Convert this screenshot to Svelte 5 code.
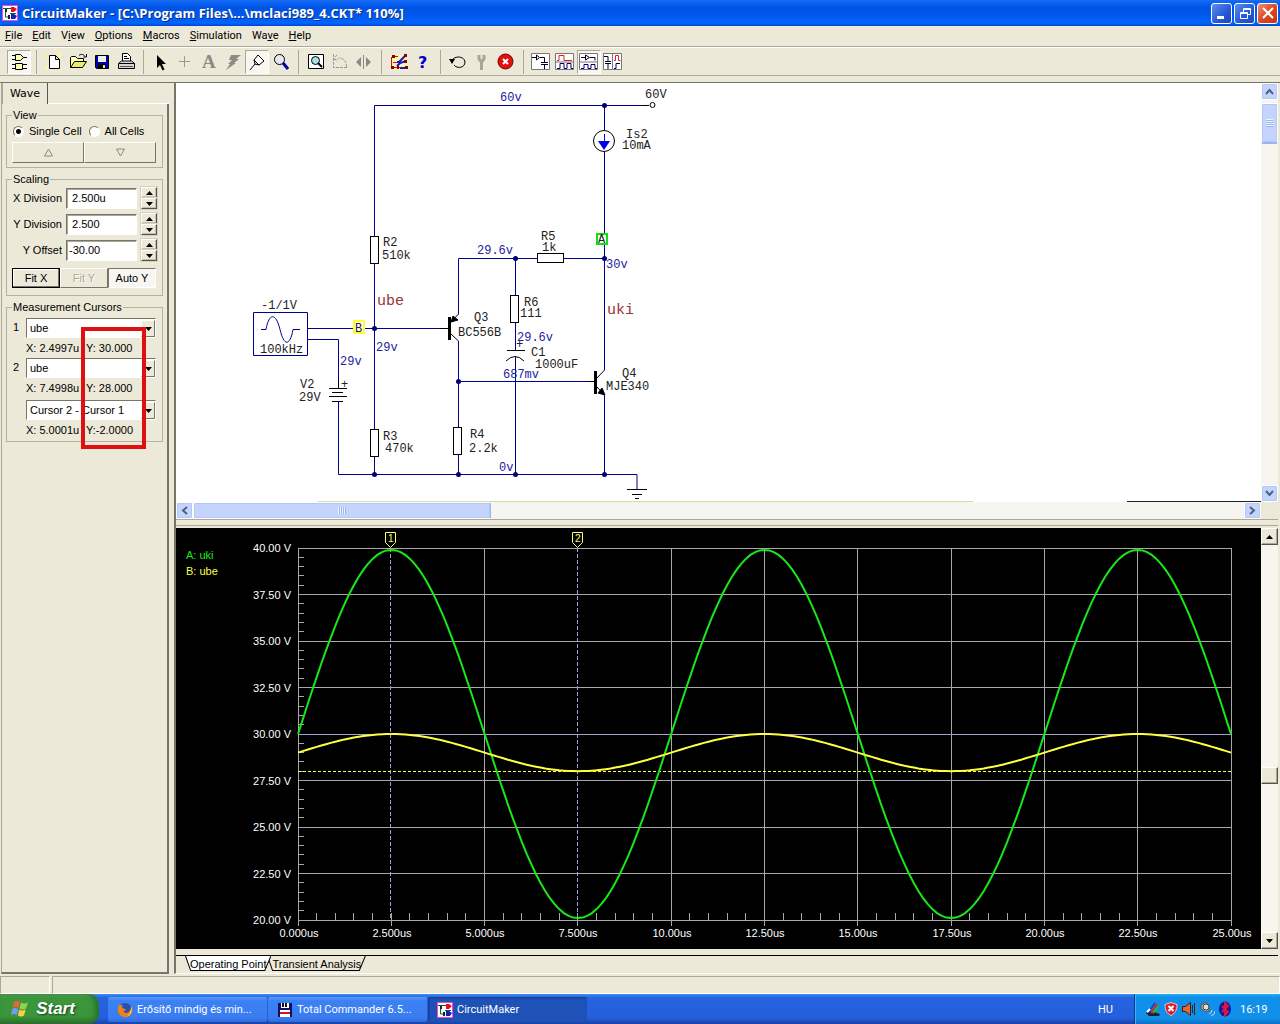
<script lang="ts">
    const menus = [
        ["", "F", "ile"], ["", "E", "dit"], ["V", "i", "ew"], ["", "O", "ptions"],
        ["", "M", "acros"], ["", "S", "imulation"], ["Wa", "v", "e"], ["", "H", "elp"],
    ];

    // toolbar, one inner list per group of buttons, icons are on a 22x22 grid
    const toolGroups = [
        [
            { name: "Parts", pressed: true, icon: `<g fill="#ffffb0" stroke="#000"><path d="M7.500 3.500h5l3 3-3 3h-5z"/><path d="M7.500 12.500h7v6h-7z"/></g><path stroke="#000" d="M4 4.500h3M4 8.500h3M15 6.500h4M4 13.500h3M4 17.500h3M15 13.500h4M15 17.500h4"/>` },
        ],
        [
            { name: "New", icon: `<path fill="#ffff70" d="M3 4h2v2H3zM15 3h3v3h-3zM3 15h2v3H3zM16 17h2v2h-2z"/><path fill="#fff" stroke="#000" d="M6.500 4.500h6l4 4v9h-10zM12.500 4.500v4h4"/>` },
            { name: "Open", icon: `<path fill="#ffffb0" stroke="#000" d="M3.500 16.500v-10l1-1h4l2 2h6v3"/><path fill="#eeea65" stroke="#000" d="M3.500 16.500l4-6h12l-4 6z"/><path fill="none" stroke="#000" d="M12 4.500c2-2 5-1 6 1M19.500 3v3h-3"/>` },
            { name: "Save", icon: `<path fill="#0000a8" stroke="#000" d="M4.500 4.500h13v13h-12l-1-1z"/><path fill="#eee" d="M7 5h8v6H7z"/><path fill="#000" d="M7 13h8v4H7z"/><path fill="#ddd" d="M12 14h2v3h-2z"/>` },
            { name: "Print", icon: `<path fill="#fff" stroke="#000" d="M7.500 10.500v-8h5l3 3v5z"/><path stroke="#000" d="M9 5.500h3M9 7.500h5"/><path fill="#d8d8d0" stroke="#000" d="M3.500 12.500l3-2.500h10l3 2.500v5h-16zM3.500 12.500h16"/><path stroke="#555" d="M5 15.500h13"/>` },
        ],
        [
            { name: "Arrow", icon: `<path d="M7 4v13l3-3 2.500 5.500 2-1L12 13h4z"/>` },
            { name: "Wire", icon: `<path stroke="#999" d="M10.500 5v11M5 10.500h11"/>` },
            { name: "Text", icon: `<text x="4" y="17" font-family="Liberation Serif, serif" font-size="19" font-weight="bold" fill="#8b8b83">A</text>` },
            { name: "Delete", icon: `<path fill="#8b8b83" d="M9 4h10l-5 4h3l-5 4h2L4 19l4-6H6l4-4H7z"/>` },
            { name: "Probe", pressed: true, icon: `<path fill="#fff" stroke="#000" d="M4 19l5-6-1-4 4-5 6 6-5 4-4-1M8 9l5 5"/>` },
            { name: "Zoom", icon: `<circle cx="9.500" cy="8.500" r="5" fill="#e8e8f0" stroke="#000"/><path stroke="#0000b0" stroke-width="3" d="M13 12l5 6"/>` },
        ],
        [
            { name: "Fit", icon: `<path fill="#fff" stroke="#000" d="M3.500 3.500h15v14h-15z"/><circle cx="10.500" cy="9.500" r="4" fill="#a6e2dd" stroke="#000"/><path stroke="#000" stroke-width="2" d="M13 12l4 4"/>` },
            { name: "Rotate", icon: `<path fill="none" stroke="#999" d="M4.500 3v13.500H19M4 8.500h5M17.500 16c0-6-3-9-8-9M8 4L5 7.500l3 3" stroke-dasharray="3 1"/>` },
            { name: "Mirror", icon: `<path stroke="#8b8b83" d="M10.500 4v14"/><path fill="#8b8b83" d="M8 6v10l-5-5zM13 6v10l5-5z"/>` },
        ],
        [
            { name: "Trace", icon: `<path fill="#ffff90" d="M3 3h16v16H3z" opacity=".5"/><path stroke="#d01010" fill="none" d="M5 5.500h5M3.500 6v10M5 11.500h4M5 16.500h13"/><path stroke="#1818c0" stroke-width="2" fill="none" d="M9 11h2l6-6M9 15l3-3 6-2M12 17h5"/><path fill="#800" d="M4 4h3v3H4zM16 3h3v3h-3zM16 9h3v3h-3zM9 15h2v3H9zM17 15h3v3h-3zM3 15h3v3H3z"/>` },
            { name: "Help", icon: `<text x="6" y="17" font-family="DejaVu Sans, sans-serif" font-size="16" font-weight="bold" fill="#0000c8">?</text>` },
        ],
        [
            { name: "Reset", icon: `<path fill="none" stroke="#000" d="M5 10c1-5 12-6 13 1 0 6-8 7-11 3"/><path d="M2 8h6l-3 5z"/>` },
            { name: "Step", icon: `<path fill="none" stroke="#a5a59c" stroke-width="3" d="M8 4v4l2.500 3v8M13 4v4l-2.500 3"/>` },
            { name: "Stop", icon: `<circle cx="10.500" cy="10.500" r="7.500" fill="#e60f0f" stroke="#730000"/><path stroke="#fff" stroke-width="2" d="M8 8l5 5M13 8l-5 5"/>` },
        ],
        [
            { name: "Schematic", icon: `<path fill="#fff" stroke="#777" d="M1.500 2.500h18v16h-18z"/><path fill="none" stroke="#002" d="M2 6.500h4M6.500 4v5l3-2.500zM10 6.500h4.500v5M11 11.500h7M11 13.500h7M14.500 14v4"/>` },
            { name: "Waves", icon: `<path fill="#fff" stroke="#777" d="M1.500 2.500h18v16h-18z"/><path fill="none" stroke="#d22" d="M3 9.500h2v-5h5v5h8"/><path fill="none" stroke="#006" d="M3 17.500h3v-5h4v5h3v-5h4v5h2"/><path stroke="#777" d="M2 11h17"/>` },
            { name: "Split rows", pressed: true, icon: `<path fill="#fff" stroke="#777" d="M1.500 2.500h18v16h-18z"/><path fill="none" stroke="#002" d="M3 6.500h4M7.500 4v5l4-2.500zM12 6.500h5v3"/><path fill="none" stroke="#006" d="M3 17.500h3v-4h4v4h3v-4h4v4h2"/><path stroke="#777" d="M2 11h17"/>` },
            { name: "Split columns", icon: `<path fill="#fff" stroke="#777" d="M1.500 2.500h18v16h-18zM10.500 2.500v16"/><path fill="none" stroke="#002" d="M2 5.500h4v5M3 10.500h6M3 12.500h6M6 13v5"/><path fill="none" stroke="#d22" d="M12 9.500h1.500v-5h3v5h2"/><path fill="none" stroke="#006" d="M12 17.500h2v-5h4"/>` },
        ],
    ];

    const scales = [
        { id: "xdiv", label: "X Division", value: " 2.500u" },
        { id: "ydiv", label: "Y Division", value: " 2.500" },
        { id: "yoff", label: "Y Offset", value: "-30.00" },
    ];

    const cursors = [
        { num: "1", source: "ube", x: "X: 2.4997u", y: "Y: 30.000" },
        { num: "2", source: "ube", x: "X: 7.4998u", y: "Y: 28.000" },
        { num: "", source: "Cursor 2 - Cursor 1", x: "X: 5.0001u", y: "Y:-2.0000" },
    ];

    // schematic labels: x, baseline, text
    const partLabels: [number, number, string][] = [
        [645, 98, "60V"], [626, 138, "Is2"], [622, 149, "10mA"], [383, 246, "R2"], [382, 259, "510k"],
        [541, 240, "R5"], [542, 251, "1k"], [524, 306, "R6"], [520, 317, "111"], [516, 348, "+"],
        [531, 356, "C1"], [535, 368, "1000uF"], [474, 321, "Q3"], [458, 336, "BC556B"], [622, 377, "Q4"],
        [606, 390, "MJE340"], [470, 438, "R4"], [469, 452, "2.2k"], [383, 440, "R3"], [385, 452, "470k"],
        [300, 388, "V2"], [299, 401, "29V"], [341, 388, "+"], [261, 309, "-1/1V"], [260, 353, "100kHz"],
    ];
    const voltLabels: [number, number, string][] = [
        [500, 101, "60v"], [477, 254, "29.6v"], [606, 268, "30v"], [517, 341, "29.6v"],
        [503, 378, "687mv"], [376, 351, "29v"], [340, 365, "29v"], [499, 471, "0v"],
    ];
    const nodes = [[604, 105], [374, 328], [515, 258], [604, 258], [458, 381], [374, 474], [458, 474], [515, 474], [604, 474]];
    const resistors = [[370, 236], [370, 429], [453, 427], [510, 295]];

    // graph area
    const left = 298, right = 1231, top = 548, bottom = 920;
    const toX = (us: number) => left + us * (right - left) / 25;
    const toY = (v: number) => bottom - (v - 20) * (bottom - top) / 20;
    const snap = (n: number) => Math.floor(n) + 0.5;

    const majors = [0, 1, 2, 3, 4, 5, 6, 7, 8, 9, 10].map(i => i * 2.5);
    const volts = [40, 37.5, 35, 32.5, 30, 27.5, 25, 22.5, 20];
    const minorX = Array.from({ length: 51 }, (_, i) => i * 0.5);
    const minorY = Array.from({ length: 41 }, (_, i) => 20 + i * 0.5);

    function sine(offset: number, amp: number) {
        var pts = [];
        for (var t = 0; t <= 25; t += 0.125) {
            pts.push(toX(t).toFixed(1) + "," + toY(offset + amp * Math.sin(t * Math.PI / 5)).toFixed(1));
        }
        return pts.join(" ");
    }
    const uki = sine(30, 9.9);
    const ube = sine(29, 1);
</script>

{#snippet logo()}
    <svg class="logo" width="16" height="16" viewBox="0 0 16 16">
        <path fill="#fff" stroke="#f4c" d="M.5.5h15v15H.5z" />
        <path stroke="#063" fill="none" d="M1 3.500h9M3.500 4v8h4M8 8.500h6" />
        <path stroke="#222" stroke-width="2" d="M4 4v3M7 10v4" />
        <path fill="#e01020" d="M9 2h3l3 2-3 3H9z" />
        <path fill="#1020c0" d="M9 9h3l3 2-2 3H9z" />
    </svg>
{/snippet}

<div class="desktop">
    <header class="titlebar">
        {@render logo()}
        <h1>CircuitMaker - [C:\Program Files\...\mclaci989_4.CKT* 110%]</h1>
        <button class="win" aria-label="Minimize"><svg width="20" height="20"><path stroke="#fff" stroke-width="3" d="M5 14.500h7" /></svg></button>
        <button class="win" aria-label="Restore"><svg width="20" height="20"><path stroke="#fff" fill="none" d="M5.500 9.500h7v6h-7zM5.500 10.500h7M8.500 9V5.500h7v6H13M8.500 6.500h7" /></svg></button>
        <button class="win close" aria-label="Close"><svg width="20" height="20"><path stroke="#fff" stroke-width="2" d="M5 5l10 10M15 5L5 15" /></svg></button>
    </header>

    <nav class="menubar">
        {#each menus as [pre, key, post]}
            <button>{pre}<u>{key}</u>{post}</button>
        {/each}
    </nav>

    <div class="toolbar">
        {#each toolGroups as group}
            <div class="tools">
                {#each group as tool}
                    <button class:pressed={tool.pressed} aria-label={tool.name}>
                        <svg width="22" height="22" viewBox="0 0 22 22">{@html tool.icon}</svg>
                    </button>
                {/each}
            </div>
        {/each}
    </div>

    <main>
        <aside>
            <div class="tabrow"><button class="tab">Wave</button><span></span></div>
            <div class="page">
                <fieldset class="view">
                    <legend>View</legend>
                    <div class="radios">
                        <label><input type="radio" name="cells" checked />Single Cell</label>
                        <label><input type="radio" name="cells" />All Cells</label>
                    </div>
                    <div class="updown">
                        <button aria-label="Previous cell"><svg width="11" height="9"><path fill="none" stroke="#8b8b83" d="M5.500 1l4 7h-8z" /></svg></button>
                        <button aria-label="Next cell"><svg width="11" height="9"><path fill="none" stroke="#8b8b83" d="M5.500 8l4-7h-8z" /></svg></button>
                    </div>
                </fieldset>

                <fieldset class="scaling">
                    <legend>Scaling</legend>
                    {#each scales as s}
                        <div class="scale">
                            <label for={s.id}>{s.label}</label>
                            <input id={s.id} type="text" value={s.value} />
                            <div class="spin">
                                <button aria-label="Increase {s.label}"><svg width="7" height="4"><path d="M0 4L3.500 0 7 4z" /></svg></button>
                                <button aria-label="Decrease {s.label}"><svg width="7" height="4"><path d="M0 0l3.500 4L7 0z" /></svg></button>
                            </div>
                        </div>
                    {/each}
                    <div class="fits">
                        <button class="default">Fit X</button>
                        <button disabled>Fit Y</button>
                        <button class="down">Auto Y</button>
                    </div>
                </fieldset>

                <fieldset class="cursors">
                    <legend>Measurement Cursors</legend>
                    {#each cursors as c, i}
                        <div class="cursor" class:diff={c.num === ""}>
                            <label for="cursor{i}">{c.num}</label>
                            <div class="combo">
                                <select id="cursor{i}" aria-label="{c.source} {i + 1}"><option>{c.source}</option></select>
                                <span class="drop"><svg width="7" height="4"><path d="M0 0h7L3.500 4z" /></svg></span>
                            </div>
                            <div class="reading"><span>{c.x}</span><span>{c.y}</span></div>
                        </div>
                    {/each}
                    <div class="mark"></div>
                </fieldset>
            </div>
        </aside>

        <section class="work">
            <div class="pane">
                <svg class="schematic" height="419" viewBox="176 83 1085 419" preserveAspectRatio="xMinYMin slice">
                    <g class="wire">
                        <path d="M374.500 236V105.500H649M374.500 263v166M374.500 457v17M307 328.500h141M307 339.500h31.500v48M338.500 402v72.500h298.500v15" />
                        <path d="M458.500 314V258.500H537M564 258.500h40M515.500 258v37M515.500 323v27M515.500 357v117M458.500 341v86M458.500 454v20M458 381.500h136M604.500 105v25M604.500 152v218M604.500 395v79" />
                        <path d="M253.500 312.500h54v43h-54zM261 329.500h5c3-17 10-17 14 0s10 17 13 0h7" />
                    </g>
                    <g class="part">
                        {#each resistors as [x, y]}
                            <rect x={x + 0.5} y={y + 0.5} width="8" height="27" />
                        {/each}
                        <rect x="537.5" y="253.5" width="26" height="9" />
                        <path d="M329 388.500h18M332 392.500h11M329 396.500h18M332 401.500h11M338.500 380v8M507 350.500h18M506 361q9-9 18 0" />
                        <path d="M451 322l7.500-8M451 334l7.500 7M597 378l7.500-8M597 387l7.500 8M440 328.500h8M588 381.500h6" />
                        <path d="M627 489.500h20M632 494.500h10M635 498.500h4M642 105.500h7" />
                        <path stroke-width="3" d="M449.500 317v23M595.500 371v23" />
                        <path fill="#000" d="M451 322l2-6 5 4zM605 395l-7-2 4-5z" />
                        <circle cx="604" cy="141" r="10.500" />
                        <circle cx="652.500" cy="105" r="2.500" />
                    </g>
                    <path fill="#00e" d="M598 141h12l-6 9z" /><path stroke="#00e" d="M604.500 134v8" />
                    {#each nodes as [x, y]}
                        <circle cx={x + 0.5} cy={y + 0.5} r="2.500" fill="#000070" />
                    {/each}
                    <rect x="354" y="321" width="10" height="12" fill="#fff" stroke="#ffff30" stroke-width="2" />
                    <rect x="597" y="234" width="10" height="10" fill="#fff" stroke="#10e010" stroke-width="2" />
                    <text x="355" y="332">B</text>
                    <text x="598" y="243">A</text>
                    {#each partLabels as [x, y, t]}<text {x} {y}>{t}</text>{/each}
                    {#each voltLabels as [x, y, t]}<text class="volt" {x} {y}>{t}</text>{/each}
                    <text class="net" x="377" y="305">ube</text>
                    <text class="net" x="607" y="314">uki</text>
                    <path stroke="#cfe0a0" d="M318 501.500h655" /><path stroke="#222" d="M1127 501.500h134" />
                </svg>
                <div class="vscroll">
                    <button aria-label="Scroll up"><svg width="9" height="7"><path d="M1 6l3.500-4L8 6" /></svg></button>
                    <div class="thumb"><i></i></div>
                    <button aria-label="Scroll down"><svg width="9" height="7"><path d="M1 1l3.500 4L8 1" /></svg></button>
                </div>
                <div class="hscroll">
                    <button aria-label="Scroll left"><svg width="7" height="9"><path d="M6 1L2 4.500 6 8" /></svg></button>
                    <div class="thumb"><i></i></div>
                    <button aria-label="Scroll right"><svg width="7" height="9"><path d="M1 1l4 3.500L1 8" /></svg></button>
                </div>
                <div class="corner"></div>
            </div>

            <div class="plot">
                <svg class="graph" height="421" viewBox="176 528 1085 421" preserveAspectRatio="xMinYMin slice">
                    <g stroke="#a8a8a8">
                        {#each majors as t}<path d="M{snap(toX(t))} {t === 2.5 || t === 7.5 ? bottom : top}V926" />{/each}
                        {#each volts as v}<path d="M{left} {snap(toY(v))}H{right}" />{/each}
                        {#each minorX as t}<path d="M{snap(toX(t))} 913V{bottom}" />{/each}
                        {#each minorY as v}<path d="M{left} {snap(toY(v))}h6" />{/each}
                    </g>
                    <path stroke="#a8a0d0" stroke-dasharray="4 2" d="M390.500 548v372M577.500 548v372M298 734.500h933" />
                    <path stroke="#ffff40" stroke-dasharray="3 2" d="M298 771.500h933" />
                    <polyline points={uki} stroke="#18e818" />
                    <polyline points={ube} stroke="#ffff40" />
                    <g class="flag"><path d="M385.500 532.500h10v10l-5 5-5-5zM572.500 532.500h10v10l-5 5-5-5z" /><text x="388" y="542">1</text><text x="575" y="542">2</text></g>
                    {#each volts as v}<text class="axis" x="291" y={Math.round(toY(v)) + 4} text-anchor="end">{v.toFixed(2)} V</text>{/each}
                    {#each majors as t}<text class="axis" x={Math.floor(toX(t)) + 1} y="937" text-anchor="middle">{t < 10 ? t.toFixed(3) : t.toFixed(2)}us</text>{/each}
                    <text x="186" y="559" fill="#18e818">A: uki</text>
                    <text x="186" y="575" fill="#ffff40">B: ube</text>
                </svg>
                <div class="classic">
                    <button aria-label="Pan up"><svg width="7" height="4"><path d="M0 4h7L3.500 0z" /></svg></button>
                    <div class="grip"></div>
                    <button aria-label="Pan down"><svg width="7" height="4"><path d="M0 0h7L3.500 4z" /></svg></button>
                </div>
            </div>

            <div class="sheets">
                <button class="current"><svg viewBox="0 0 84 16" preserveAspectRatio="none"><path fill="#fff" stroke="#000" d="M.5 0l5 15.500h72L83.500 0" /></svg><span>Operating Point</span></button>
                <button><svg viewBox="0 0 98 16" preserveAspectRatio="none"><path fill="#ece9d8" stroke="#000" d="M.5 0l5 15.500h86L97.500 0" /></svg><span>Transient Analysis</span></button>
            </div>
        </section>
    </main>

    <div class="status"><span></span><span></span></div>

    <footer class="taskbar">
        <button class="start">
            <svg width="20" height="20" viewBox="0 0 20 20">
                <path fill="#f0603a" d="M4 3q3-2 6 0L8.500 9q-3-2-6 0z" />
                <path fill="#8fd44a" d="M11 3.500q3 2 7 0L16 9.500q-3 2-6.500 0z" />
                <path fill="#6f9df2" d="M2.200 10q3-2 6 0L7 16q-3-2-6 0z" />
                <path fill="#fbd03c" d="M9.200 10.500q3 2 6.500 0L14 16.500q-3 2-6 0z" />
            </svg>
            Start
        </button>
        <div class="tasks">
            <button>
                <svg width="16" height="16"><circle cx="8" cy="8" r="7" fill="#2a50b0" /><path fill="#f08018" d="M2 3c-3 6 0 12 6 12s9-6 6.500-11c0 3-1 4-2 5-1 2-5 3-6 0 2 0 2-1 2-2-3 0-4-2-3-4z" /><path fill="#ffd040" d="M14 4c2 5 0 9-4 11 3-3 4-6 4-11z" /></svg>
                <span>Erősítő mindig és min...</span>
            </button>
            <button>
                <svg width="16" height="16"><path fill="#10106a" d="M1 1h14v14H1z" /><path fill="#fff" d="M4 1h8v5H4zM3 8h10v7H3z" /><path stroke="#d01818" stroke-width="2" d="M3 11h10" /><path stroke="#111" stroke-width="2" d="M6 1v4M9 1v4" /></svg>
                <span>Total Commander 6.5...</span>
            </button>
            <button class="active">
                {@render logo()}
                <span>CircuitMaker</span>
            </button>
        </div>
        <span class="lang">HU</span>
        <div class="tray">
            <svg width="16" height="16"><path fill="#222" d="M1 12l5-2 9 3-1 2H4z" /><path stroke="#2040e0" stroke-width="2" d="M3 12l7-10" /><path stroke="#e02020" stroke-width="2" d="M6 12l6-9" /><path stroke="#20c030" stroke-width="2" d="M8 12l5-7" /><path stroke="#fff" stroke-width="2" d="M2 11l3-3" /></svg>
            <svg width="16" height="16"><path fill="#d8202a" stroke="#f6c0c0" d="M8 1.500l6 2c0 6-2 9-6 11-4-2-6-5-6-11z" /><path stroke="#fff" stroke-width="2" d="M5.500 5l5 5M10.500 5l-5 5" /></svg>
            <svg width="16" height="16"><path fill="#e06a30" stroke="#401808" d="M1.500 5.500h3l5-4v13l-5-4h-3z" /><path fill="none" stroke="#222" d="M11.500 4v8M13.500 2v12" /></svg>
            <svg width="16" height="16"><path fill="#b0b0a8" stroke="#555" d="M2 4l5-3 4 8-4 2-5-3z" /><circle cx="7" cy="6" r="3" fill="#ddd" stroke="#444" /><path fill="none" stroke="#bbd8f0" d="M10 13q3-1 3-4M12 15q4-1 4-5" /></svg>
            <svg width="16" height="16"><ellipse cx="8" cy="8" rx="6" ry="7.500" fill="#1018a8" /><path fill="none" stroke="#e01838" stroke-width="2" d="M5 5l6 6-3 3V2l3 3-6 6" /></svg>
            <time>16:19</time>
        </div>
    </footer>
</div>

<style>
    :global(body) {
        margin: 0;
        background: #ece9d8;
    }
    * {
        box-sizing: border-box;
    }
    .desktop {
        min-height: 100vh;
        display: flex;
        flex-direction: column;
        background: #ece9d8;
        font: 11px "Liberation Sans", Arial, sans-serif;
        color: #000;
    }
    button {
        font: inherit;
        color: inherit;
        padding: 0;
        margin: 0;
        border: 0;
        background: none;
        display: flex;
        align-items: center;
        justify-content: center;
    }
    svg {
        display: block;
        flex: none;
    }
    .titlebar {
        height: 26px;
        display: flex;
        align-items: center;
        gap: 2px;
        padding: 0 2px;
        background: linear-gradient(#1a6cf0, #0860f4 12%, #0054e3 30%, #0058ee 60%, #0066ff 88%, #0046c8);
    }
    h1 {
        flex: 1;
        margin: 0 0 0 2px;
        font: bold 13px "Open Sans", "Trebuchet MS", sans-serif;
        color: #fff;
        text-shadow: 1px 1px #0a2a80;
        white-space: nowrap;
    }
    .win {
        width: 21px;
        height: 21px;
        border: 1px solid #fff;
        border-radius: 3px;
        background: linear-gradient(135deg, #5c8df0, #2458d8 60%, #1c48c0);
    }
    .win.close {
        background: linear-gradient(135deg, #f0907a, #dc4a22 50%, #c03810);
    }
    .menubar {
        height: 21px;
        display: flex;
        align-items: center;
        gap: 10px;
        padding: 0 5px 2px;
        border-bottom: 1px solid #aca899;
        font-family: Roboto, Tahoma, sans-serif;
    }
    .menubar button {
        display: block;
    }
    .toolbar {
        height: 29px;
        display: flex;
        align-items: center;
        padding-left: 7px;
        border-top: 1px solid #fff;
        border-bottom: 1px solid #aca899;
    }
    .tools {
        display: flex;
    }
    .tools + .tools {
        margin-left: 5px;
        padding-left: 5px;
        border-left: 1px solid #aca899;
    }
    .tools button {
        width: 24px;
        height: 24px;
    }
    .tools .pressed {
        background: #f7f6f0;
        border: 1px solid;
        border-color: #aca899 #fff #fff #aca899;
    }
    main {
        flex: 1;
        display: flex;
        gap: 5px;
        margin-top: 6px;
        border-top: 1px solid #77756a;
    }
    aside {
        width: 169px;
        flex: none;
        display: flex;
        flex-direction: column;
        padding-left: 1px;
    }
    .tabrow {
        display: flex;
        height: 21px;
    }
    .tab {
        width: 47px;
        border-left: 2px solid #aca899;
        border-right: 1px solid #555;
        font: 11px "DejaVu Sans", Verdana, sans-serif;
    }
    .tabrow span {
        flex: 1;
        border-bottom: 1px solid #fff;
    }
    .page {
        flex: 1;
        padding: 5px 4px 0 4px;
        border: solid #77756a;
        border-width: 0 2px 2px 1px;
        border-left-color: #aca899;
    }
    fieldset {
        position: relative;
        margin: 0 0 5px;
        padding: 0 6px 0 5px;
        min-width: 0;
        border: 1px solid #b5b1a0;
    }
    legend {
        padding: 0 1px;
        line-height: 12px;
    }
    .view {
        height: 59px;
    }
    .scaling {
        height: 123px;
    }
    .cursors {
        height: 141px;
    }
    .radios {
        display: flex;
        gap: 7px;
        padding: 3px 0 4px 1px;
    }
    .radios label {
        display: flex;
        align-items: center;
        gap: 5px;
        height: 14px;
        white-space: nowrap;
    }
    .radios input {
        appearance: none;
        width: 11px;
        height: 11px;
        margin: 0;
        border: 1px solid;
        border-color: #77756a #fff #fff #77756a;
        border-radius: 50%;
        background: #fff;
    }
    .radios input:checked {
        background: radial-gradient(circle, #000 2px, #fff 3px);
    }
    .updown {
        display: flex;
    }
    .updown button {
        flex: 1;
        height: 21px;
        border: 1px solid;
        border-color: #fff #77756a #77756a #fff;
    }
    .scale {
        display: grid;
        grid-template-columns: 50px 71px 16px;
        column-gap: 4px;
        align-items: center;
        height: 26px;
    }
    .scale label {
        text-align: right;
        white-space: nowrap;
    }
    .scale input {
        width: 71px;
        height: 21px;
        padding: 0 2px;
        border: 1px solid;
        border-color: #77756a #fff #fff #77756a;
        box-shadow: inset 1px 1px #aca899;
        background: #fff;
        font: inherit;
    }
    .spin button {
        width: 16px;
        height: 11px;
        border: 1px solid;
        border-color: #fff #55534a #55534a #fff;
        box-shadow: inset -1px -1px #c5c1b0, 0 0 0 1px #d5d1c0;
    }
    .fits {
        display: grid;
        grid-template-columns: repeat(3, 1fr);
        margin-top: 5px;
    }
    .fits button {
        height: 20px;
        border: 1px solid;
        border-color: #fff #77756a #77756a #fff;
    }
    .fits .default {
        border: 1px solid #000;
        box-shadow: inset -1px -1px #77756a, inset 1px 1px #fff;
    }
    .fits button:disabled {
        color: #aca899;
        text-shadow: 1px 1px #fff;
    }
    .fits .down {
        background: #f7f6f0;
        border-color: #77756a #fff #fff #77756a;
    }
    .cursor {
        display: grid;
        grid-template-columns: 14px 130px;
        row-gap: 3px;
        padding-top: 4px;
    }
    .cursor:first-of-type {
        padding-top: 5px;
    }
    .cursor.diff {
        padding-top: 6px;
    }
    .cursor label {
        padding-left: 1px;
        line-height: 18px;
    }
    .combo {
        position: relative;
    }
    .combo select {
        appearance: none;
        display: block;
        width: 100%;
        height: 20px;
        padding: 0 3px;
        border: 1px solid;
        border-color: #77756a #fff #fff #77756a;
        border-radius: 0;
        background: #fff;
        color: #000;
        font: inherit;
    }
    .drop {
        position: absolute;
        top: 2px;
        right: 1px;
        width: 14px;
        height: 17px;
        display: flex;
        align-items: center;
        justify-content: center;
        background: #ece9d8;
        border: 1px solid;
        border-color: #fff #77756a #77756a #fff;
        pointer-events: none;
    }
    .reading {
        grid-column: 2;
        display: grid;
        grid-template-columns: 60px 1fr;
        line-height: 14px;
        height: 13px;
        white-space: nowrap;
    }
    .mark {
        position: absolute;
        left: 74px;
        top: 14px;
        width: 65px;
        height: 122px;
        border: 4px solid #e01010;
    }
    .work {
        flex: 1;
        min-width: 0;
        display: flex;
        flex-direction: column;
        padding-right: 2px;
        border-left: 2px solid #77756a;
        border-bottom: 1px solid #fff;
    }
    .pane {
        display: grid;
        grid-template-columns: minmax(0, 1fr) 17px;
        background: #fff;
        border-bottom: 1px solid #aca899;
    }
    .schematic {
        width: 100%;
        fill: none;
        background: #fff;
    }
    .schematic text {
        font: 12px "Liberation Mono", "Courier New", monospace;
        fill: #222;
    }
    .schematic .volt {
        fill: #2222a0;
    }
    .schematic .net {
        font-size: 15px;
        fill: #963434;
    }
    .wire {
        stroke: #000090;
    }
    .part {
        stroke: #000;
    }
    .part rect,
    .part circle {
        fill: #fff;
    }
    .vscroll,
    .hscroll {
        display: flex;
        background: #f6f5f0;
    }
    .vscroll {
        flex-direction: column;
        gap: 3px;
    }
    .vscroll button,
    .hscroll button,
    .thumb {
        border: 1px solid #fff;
        border-radius: 2px;
        background: #c4d4fc;
        box-shadow: inset 0 0 0 1px #b4c8f6;
    }
    .vscroll button,
    .hscroll button {
        width: 17px;
        height: 17px;
    }
    .vscroll button svg,
    .hscroll button svg {
        fill: none;
        stroke: #4d6185;
        stroke-width: 2;
    }
    .thumb {
        display: flex;
        align-items: center;
        justify-content: center;
    }
    .vscroll .thumb {
        height: 41px;
        border-bottom: 2px solid #9cb4ec;
    }
    .vscroll button:last-child {
        margin-top: auto;
    }
    .vscroll i {
        width: 7px;
        height: 8px;
        background: repeating-linear-gradient(#eef4fe 0 1px, #9cb4ec 1px 2px);
    }
    .hscroll .thumb {
        width: 298px;
        height: 17px;
        border-right: 1px solid #9cb4ec;
    }
    .hscroll button:last-child {
        margin-left: auto;
    }
    .hscroll i {
        width: 8px;
        height: 7px;
        background: repeating-linear-gradient(90deg, #eef4fe 0 1px, #9cb4ec 1px 2px);
    }
    .corner {
        background: #ece9d8;
    }
    .plot {
        display: grid;
        grid-template-columns: minmax(0, 1fr) 17px;
        margin-top: 5px;
        border-top: 1px solid #aca899;
        padding-top: 2px;
    }
    .graph {
        width: 100%;
        background: #000;
    }
    .graph text {
        font: 11px "Liberation Sans", Arial, sans-serif;
    }
    .graph .axis {
        fill: #fff;
    }
    .graph polyline {
        fill: none;
        stroke-width: 2;
    }
    .flag {
        stroke: #ffff70;
        fill: none;
    }
    .flag text {
        font-size: 10px;
        stroke: none;
        fill: #ffff70;
    }
    .classic {
        display: flex;
        flex-direction: column;
        justify-content: space-between;
        background: #f6f5ee;
    }
    .classic button,
    .grip {
        height: 17px;
        background: #ece9d8;
        border: 1px solid;
        border-color: #fff #55534a #55534a #fff;
        box-shadow: inset -1px -1px #aca899;
    }
    .grip {
        margin-top: 74px;
    }
    .sheets {
        display: flex;
        margin-top: 6px;
        height: 18px;
        padding-left: 9px;
        border-top: 1px solid #000;
    }
    .sheets button {
        position: relative;
        height: 15px;
        padding: 0 5px;
    }
    .sheets button + button {
        margin-left: -4px;
    }
    .sheets svg {
        position: absolute;
        inset: 0;
        width: 100%;
        height: 100%;
    }
    .sheets span {
        position: relative;
    }
    .sheets .current {
        z-index: 1;
    }
    .status {
        height: 18px;
        margin-top: 2px;
        display: flex;
        gap: 2px;
    }
    .status span {
        border: 1px solid;
        border-color: #aca899 #fff #fff #aca899;
    }
    .status span:first-child {
        width: 50px;
    }
    .status span:last-child {
        flex: 1;
    }
    .taskbar {
        height: 30px;
        display: flex;
        background: linear-gradient(#3f8cf3, #2663e0 12%, #245edb 80%, #1941a5);
        color: #fff;
        font-family: Roboto, Tahoma, sans-serif;
    }
    .start {
        width: 99px;
        gap: 6px;
        padding-right: 14px;
        border-radius: 0 10px 10px 0;
        background: linear-gradient(#5aa55a, #3c963c 15%, #3a943a 75%, #2a6e2a);
        box-shadow: inset -4px 0 5px #2a7030;
        font: italic bold 17px "Liberation Sans", Arial, sans-serif;
        text-shadow: 1px 1px 2px #144014;
    }
    .tasks {
        flex: 1;
        display: flex;
        gap: 1px;
        padding: 3px 0 2px 9px;
    }
    .tasks button {
        width: 159px;
        justify-content: flex-start;
        gap: 4px;
        padding-left: 9px;
        border-radius: 2px;
        background: linear-gradient(#5a98fa, #3c81f3 15%, #3a7cf0 85%, #2f6ad8);
        white-space: nowrap;
    }
    .tasks .active {
        background: #1e52b7;
        box-shadow: inset 1px 1px 2px #123a8c;
    }
    .lang {
        align-self: center;
        padding-right: 21px;
    }
    .tray {
        width: 146px;
        display: flex;
        align-items: center;
        gap: 2px;
        padding-left: 10px;
        border-left: 1px solid #0a3a90;
        background: linear-gradient(#1cb0f4, #0f8fe8 12%, #1290e9 80%, #0b6fc4);
        box-shadow: inset 1px 0 #35b8f8;
    }
    .tray time {
        margin-left: 5px;
    }
</style>
